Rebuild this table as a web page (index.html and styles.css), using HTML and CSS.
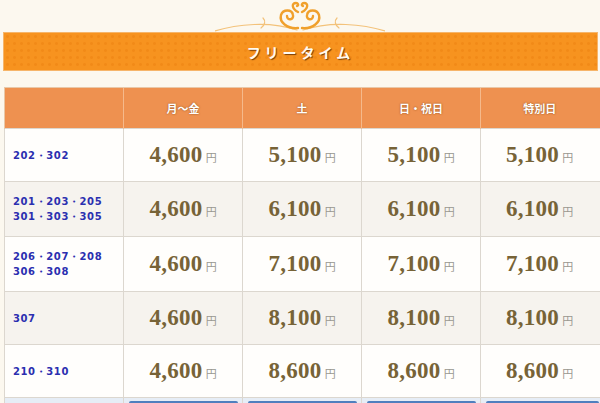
FILE: index.html
```html
<!DOCTYPE html>
<html lang="ja">
<head>
<meta charset="utf-8">
<link rel="stylesheet" href="styles.css">
</head>
<body>
<div class="page">
  <div class="ornament">
    <svg width="170" height="32" viewBox="0 0 170 32" fill="none">
      <g stroke="#f3c27a" stroke-width="1.2" stroke-linecap="round">
        <path d="M0,31 C22,24 55,21 82,30"/>
        <path d="M46,28 C50,25 51,21 48,18"/>
        <path d="M170,31 C148,24 115,21 88,30"/>
        <path d="M124,28 C120,25 119,21 122,18"/>
      </g>
      <g stroke="#f0a02c" stroke-width="2.4" stroke-linecap="round">
        <path d="M83,28 C72,29 64,22 66,15 C68,9 77,9 78,15 C79,20 72,21 72,16"/>
        <path d="M87,28 C98,29 106,22 104,15 C102,9 93,9 92,15 C91,20 98,21 98,16"/>
        <path d="M83,12 C77,9 76,3 81,3 C83,3 84,5 82,6"/>
        <path d="M87,12 C93,9 94,3 89,3 C87,3 86,5 88,6"/>
      </g>
    </svg>
  </div>
  <div class="banner"><h2 class="banner-title">フリータイム</h2></div>
  <table class="price-table">
    <colgroup>
      <col class="c-fixed"><col class="c-fixed"><col class="c-fixed"><col class="c-fixed"><col>
    </colgroup>
    <thead>
      <tr class="head">
        <th></th><th>月～金</th><th>土</th><th>日・祝日</th><th>特別日</th>
      </tr>
    </thead>
    <tbody>
      <tr class="row odd">
        <td class="room">202・302</td>
        <td class="price"><span class="num">4,600</span><span class="yen">円</span></td>
        <td class="price"><span class="num">5,100</span><span class="yen">円</span></td>
        <td class="price"><span class="num">5,100</span><span class="yen">円</span></td>
        <td class="price last"><span class="num">5,100</span><span class="yen">円</span></td>
      </tr>
      <tr class="row even tall">
        <td class="room">201・203・205<br>301・303・305</td>
        <td class="price"><span class="num">4,600</span><span class="yen">円</span></td>
        <td class="price"><span class="num">6,100</span><span class="yen">円</span></td>
        <td class="price"><span class="num">6,100</span><span class="yen">円</span></td>
        <td class="price last"><span class="num">6,100</span><span class="yen">円</span></td>
      </tr>
      <tr class="row odd tall">
        <td class="room">206・207・208<br>306・308</td>
        <td class="price"><span class="num">4,600</span><span class="yen">円</span></td>
        <td class="price"><span class="num">7,100</span><span class="yen">円</span></td>
        <td class="price"><span class="num">7,100</span><span class="yen">円</span></td>
        <td class="price last"><span class="num">7,100</span><span class="yen">円</span></td>
      </tr>
      <tr class="row even">
        <td class="room">307</td>
        <td class="price"><span class="num">4,600</span><span class="yen">円</span></td>
        <td class="price"><span class="num">8,100</span><span class="yen">円</span></td>
        <td class="price"><span class="num">8,100</span><span class="yen">円</span></td>
        <td class="price last"><span class="num">8,100</span><span class="yen">円</span></td>
      </tr>
      <tr class="row odd">
        <td class="room">210・310</td>
        <td class="price"><span class="num">4,600</span><span class="yen">円</span></td>
        <td class="price"><span class="num">8,600</span><span class="yen">円</span></td>
        <td class="price"><span class="num">8,600</span><span class="yen">円</span></td>
        <td class="price last"><span class="num">8,600</span><span class="yen">円</span></td>
      </tr>
      <tr class="foot">
        <td></td>
        <td><div class="btn"></div></td>
        <td><div class="btn"></div></td>
        <td><div class="btn"></div></td>
        <td><div class="btn"></div></td>
      </tr>
    </tbody>
  </table>
</div>
</body>
</html>
```

FILE: styles.css
```css
html, body {
  margin: 0;
  padding: 0;
  background: #fcf8ef;
  overflow: hidden;
}
.page {
  width: 600px;
  height: 403px;
  overflow: hidden;
}
.ornament {
  height: 32px;
  display: flex;
  justify-content: center;
}
.ornament svg { display: block; }
.banner {
  margin: 0 2px 0 3px;
  height: 37px;
  border: 1px solid #f6b56a;
  background-color: #f7931f;
  background-image: radial-gradient(circle, rgba(230,120,10,0.35) 1.2px, transparent 1.6px);
  background-size: 7px 7px;
  display: flex;
  align-items: center;
  justify-content: center;
}
.banner-title {
  margin: 0;
  font-family: "Noto Sans CJK JP", sans-serif;
  font-weight: 700;
  font-size: 14px;
  letter-spacing: 4px;
  color: #fffaf0;
  text-shadow: 1px 1px 1px #7a3d05;
}
.price-table {
  margin: 16px 0 0 4px;
  border-collapse: collapse;
  table-layout: fixed;
  width: 600px;
}
.c-fixed { width: 119px; }
.head th {
  height: 40px;
  padding: 0;
  background: #ee9150;
  border-left: 1px solid #f5b98b;
  border-top: 1px solid #e9c8a8;
  font-family: "Noto Sans CJK JP", sans-serif;
  font-weight: 700;
  font-size: 11px;
  color: #ffffff;
  text-shadow: 0 0 2px #8a4a16;
  text-align: center;
  vertical-align: middle;
}
.head th:first-child { border-left: 1px solid #e9c8a8; }
.head th:last-child { padding-right: 5px; }
.row td {
  border: 1px solid #dcd7cf;
  padding: 0;
  height: 52px;
  vertical-align: middle;
}
.row td.last { padding-right: 5px; }
.row.tall td { height: 54px; }
.row.odd td { background: #fffefc; }
.row.even td { background: #f6f3ee; }
.room {
  padding-left: 8px !important;
  font-family: "DejaVu Sans", Verdana, sans-serif;
  font-weight: 700;
  font-size: 10px;
  line-height: 15px;
  letter-spacing: 0.6px;
  color: #2b2fb0;
}
.price {
  text-align: center;
  white-space: nowrap;
}
.num {
  font-family: "Liberation Serif", "Times New Roman", serif;
  font-weight: 700;
  font-size: 23px;
  color: #776337;
  letter-spacing: 0.3px;
}
.yen {
  font-family: "Noto Sans CJK JP", sans-serif;
  font-size: 11px;
  color: #999790;
  margin-left: 3px;
}
.foot td {
  height: 8px;
  padding: 0;
  background: #e6edf6;
  border-left: 1px solid #dcd7cf;
  border-right: 1px solid #dcd7cf;
  vertical-align: top;
}
.btn {
  margin: 3px 4px 0 5px;
  height: 6px;
  border-top: 2px solid #4f7fbe;
  background: #d8e4f2;
  border-radius: 2px 2px 0 0;
}
```
